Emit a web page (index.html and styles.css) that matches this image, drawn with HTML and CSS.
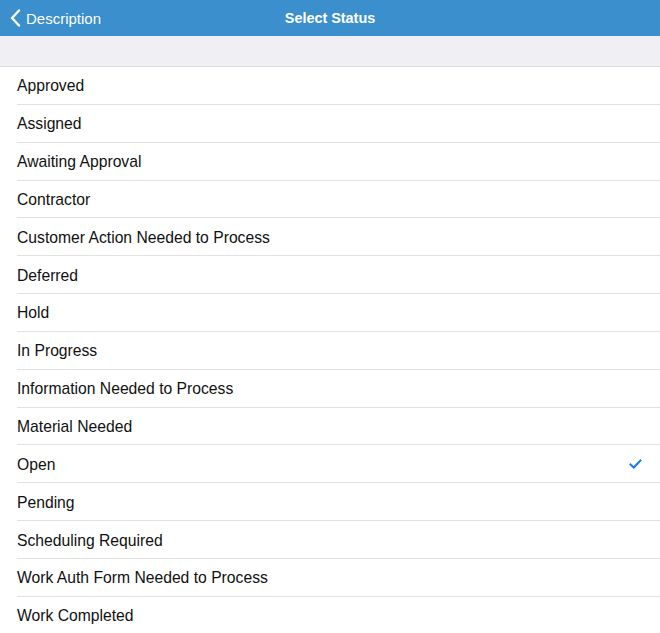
FILE: index.html
```html
<!DOCTYPE html>
<html lang="en">
<head>
  <meta charset="UTF-8" />
  <meta name="viewport" content="width=device-width, initial-scale=1.0"/>
  <title>Select Status</title>
  <link rel="stylesheet" href="styles.css">
</head>
<body>

  <div class="nav-bar">
    <a class="back-btn" href="#">
      <svg class="chevron" width="11" height="18" viewBox="0 0 11 18">
        <path d="M9 1.5 L2 9 L9 16.5" fill="none" stroke="#fff" stroke-width="2.4" stroke-linecap="round" stroke-linejoin="round"/>
      </svg>
      <span>Description</span>
    </a>
    <div class="nav-title">Select Status</div>
  </div>

  <div class="section-gap"></div>

  <ul class="status-list">
    <li>Approved</li>
    <li>Assigned</li>
    <li>Awaiting Approval</li>
    <li>Contractor</li>
    <li>Customer Action Needed to Process</li>
    <li>Deferred</li>
    <li>Hold</li>
    <li>In Progress</li>
    <li>Information Needed to Process</li>
    <li>Material Needed</li>
    <li class="selected">Open
      <svg class="check" width="13" height="10" viewBox="0 0 13 10">
        <path d="M1.5 5.5 L4.8 8.5 L11.5 1.5" fill="none" stroke="#1b7cf3" stroke-width="2" stroke-linecap="square"/>
      </svg>
    </li>
    <li>Pending</li>
    <li>Scheduling Required</li>
    <li>Work Auth Form Needed to Process</li>
    <li>Work Completed</li>
  </ul>

</body>
</html>
```

FILE: styles.css
```css
body {
  margin: 0;
  font-family: 'Liberation Sans', Arial, sans-serif;
  background-color: #fff;
  color: #000;
  overflow: hidden;
}

.nav-bar {
  height: 36px;
  background-color: #3a8fcc;
  color: #fff;
  display: flex;
  align-items: center;
  justify-content: center;
  position: relative;
}

.back-btn {
  position: absolute;
  left: 10px;
  top: 0;
  height: 36px;
  display: flex;
  align-items: center;
  gap: 5px;
  color: #fff;
  text-decoration: none;
  font-size: 15px;
}

.nav-title {
  font-size: 14.4px;
  font-weight: bold;
}

.section-gap {
  height: 30px;
  background-color: #efeff4;
  border-bottom: 1px solid #dcdce0;
}

.status-list {
  list-style: none;
  margin: 0;
  padding: 0 0 0 17px;
}

.status-list li {
  height: 34.85px;
  padding-top: 2px;
  display: flex;
  align-items: center;
  padding-right: 18px;
  border-bottom: 1px solid #e2e2e4;
  font-size: 15.7px;
  color: #111;
}

.status-list li.selected {
  justify-content: space-between;
}

.check {
  display: block;
  margin-top: -2px;
}
```
